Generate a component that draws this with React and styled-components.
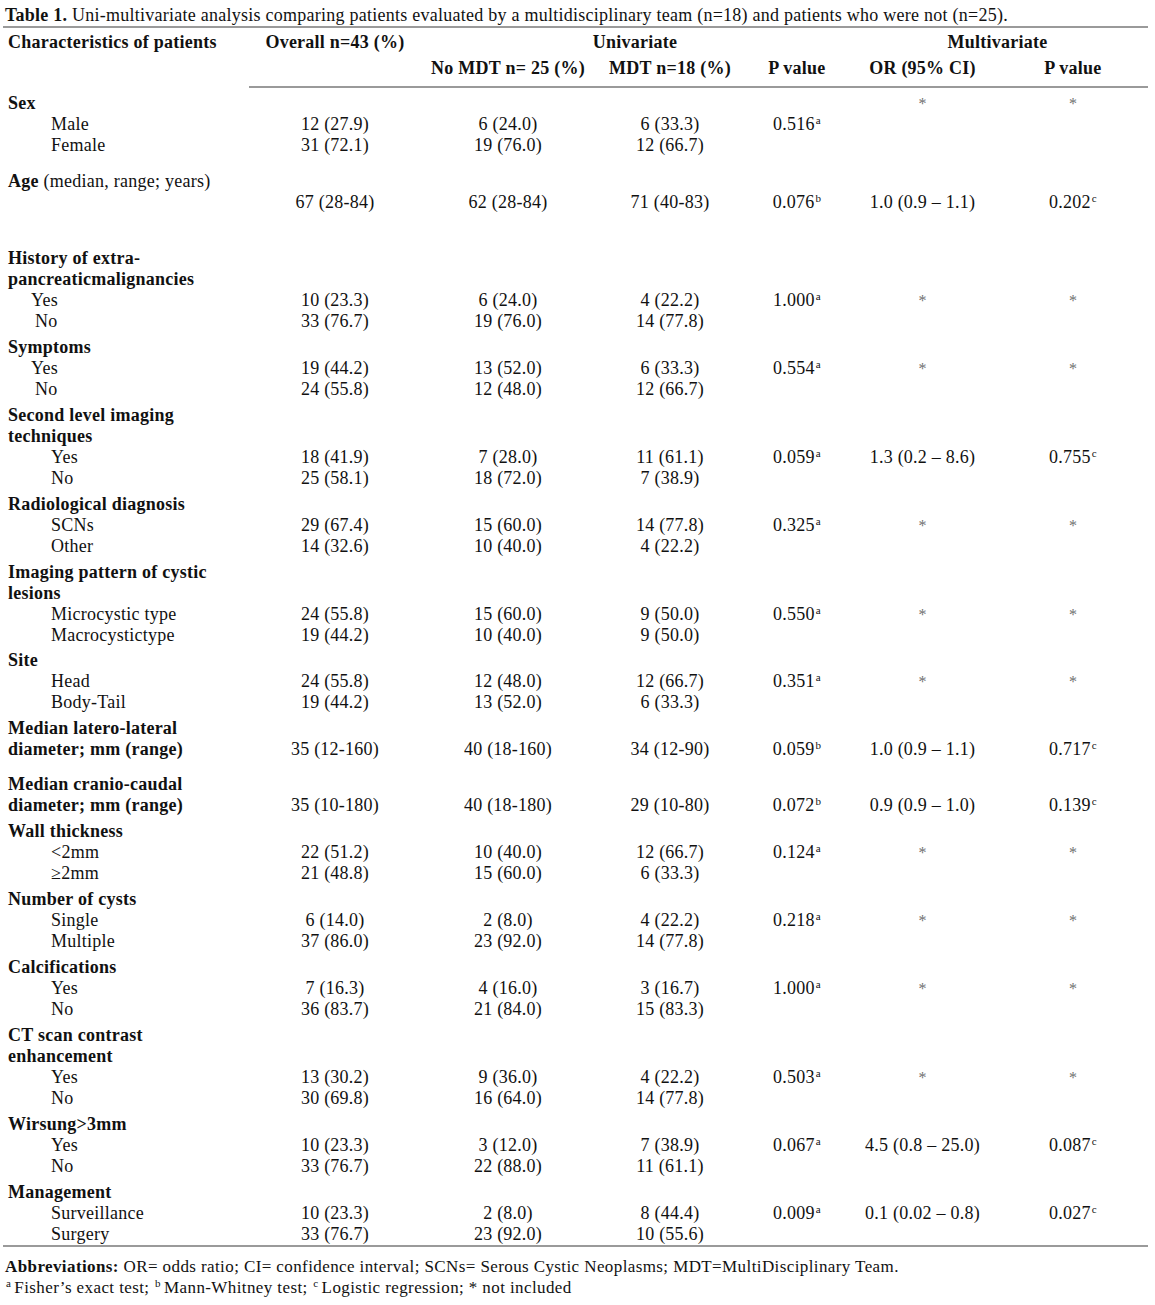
import React from "react";
import styled, { createGlobalStyle } from "styled-components";

const GlobalStyle = createGlobalStyle`
    body {
        margin: 0;
        background: #ffffff;
        color: #111111;
        font-family: "Liberation Serif", "Times New Roman", serif;
        font-size: 18px;
        letter-spacing: 0.25px;
    }
`;

const COLUMNS = "244px 176px 170px 154px 100px 151px 150px";

const Page = styled.div`
    width: 1145px;
    padding: 5px 0 0 3px;
`;

const Title = styled.div`
    height: 21px;
    line-height: 21px;
    padding-left: 2px;
    white-space: nowrap;
`;

const Rule = styled.div`
    height: 2px;
    background: #9a9a9a;
    margin-left: ${(p) => p.$inset || 0}px;
`;

const Head = styled.div`
    display: grid;
    grid-template-columns: ${COLUMNS};
    grid-auto-rows: 21px;
    row-gap: 5px;
    padding: 4px 0 7px;
    font-weight: 700;
    line-height: 21px;
`;

const HeadCell = styled.div`
    grid-column: ${(p) => p.$col};
    grid-row: ${(p) => p.$row};
    text-align: ${(p) => (p.$left ? "left" : "center")};
    padding-left: ${(p) => (p.$left ? 5 : 0)}px;
    white-space: nowrap;
`;

const Body = styled.div`
    padding: 5px 0 0;
`;

const Row = styled.div`
    display: grid;
    grid-template-columns: ${COLUMNS};
    height: 21px;
    line-height: 21px;
    margin-top: ${(p) => p.$gap || 0}px;
`;

const Label = styled.div`
    padding-left: ${(p) => p.$indent}px;
    font-weight: ${(p) => (p.$bold ? 700 : 400)};
    white-space: nowrap;
`;

const Cell = styled.div`
    text-align: center;
    white-space: nowrap;
`;

const Sup = styled.sup`
    font-size: 11px;
    line-height: 0;
    vertical-align: 6px;
    margin-left: 1px;
    margin-right: ${(p) => (p.$spaced ? 3 : 0)}px;
`;

const Star = styled.span`
    font-size: 16px;
    color: #707070;
    vertical-align: 2px;
`;

const Notes = styled.div`
    padding: 9px 0 0 2px;
    line-height: 21px;
    font-size: 17px;
    letter-spacing: 0.4px;
`;

const Note = styled.div`
    white-space: nowrap;
`;

const Bold = styled.span`
    font-weight: 700;
`;

const Normal = styled.span`
    font-weight: 400;
`;

const S = "*";

const rows = [
    { label: "Sex", bold: true, v: ["", "", "", "", S, S] },
    { label: "Male", indent: 48, v: ["12 (27.9)", "6 (24.0)", "6 (33.3)", ["0.516", "a"]] },
    { label: "Female", indent: 48, v: ["31 (72.1)", "19 (76.0)", "12 (66.7)"] },
    {
        label: (
            <>
                Age<Normal> (median, range; years)</Normal>
            </>
        ),
        bold: true,
        gap: 15,
    },
    { label: "", v: ["67 (28-84)", "62 (28-84)", "71 (40-83)", ["0.076", "b"], "1.0 (0.9 – 1.1)", ["0.202", "c"]] },
    { label: "History of extra-", bold: true, gap: 35 },
    { label: "pancreaticmalignancies", bold: true },
    { label: "Yes", indent: 28, v: ["10 (23.3)", "6 (24.0)", "4 (22.2)", ["1.000", "a"], S, S] },
    { label: "No", indent: 32, v: ["33 (76.7)", "19 (76.0)", "14 (77.8)"] },
    { label: "Symptoms", bold: true, gap: 5 },
    { label: "Yes", indent: 28, v: ["19 (44.2)", "13 (52.0)", "6 (33.3)", ["0.554", "a"], S, S] },
    { label: "No", indent: 32, v: ["24 (55.8)", "12 (48.0)", "12 (66.7)"] },
    { label: "Second level imaging", bold: true, gap: 5 },
    { label: "techniques", bold: true },
    { label: "Yes", indent: 48, v: ["18 (41.9)", "7 (28.0)", "11 (61.1)", ["0.059", "a"], "1.3 (0.2 – 8.6)", ["0.755", "c"]] },
    { label: "No", indent: 48, v: ["25 (58.1)", "18 (72.0)", "7 (38.9)"] },
    { label: "Radiological diagnosis", bold: true, gap: 5 },
    { label: "SCNs", indent: 48, v: ["29 (67.4)", "15 (60.0)", "14 (77.8)", ["0.325", "a"], S, S] },
    { label: "Other", indent: 48, v: ["14 (32.6)", "10 (40.0)", "4 (22.2)"] },
    { label: "Imaging pattern of cystic", bold: true, gap: 5 },
    { label: "lesions", bold: true },
    { label: "Microcystic type", indent: 48, v: ["24 (55.8)", "15 (60.0)", "9 (50.0)", ["0.550", "a"], S, S] },
    { label: "Macrocystictype", indent: 48, v: ["19 (44.2)", "10 (40.0)", "9 (50.0)"] },
    { label: "Site", bold: true, gap: 4 },
    { label: "Head", indent: 48, v: ["24 (55.8)", "12 (48.0)", "12 (66.7)", ["0.351", "a"], S, S] },
    { label: "Body-Tail", indent: 48, v: ["19 (44.2)", "13 (52.0)", "6 (33.3)"] },
    { label: "Median latero-lateral", bold: true, gap: 5 },
    {
        label: "diameter; mm (range)",
        bold: true,
        v: ["35 (12-160)", "40 (18-160)", "34 (12-90)", ["0.059", "b"], "1.0 (0.9 – 1.1)", ["0.717", "c"]],
    },
    { label: "Median cranio-caudal", bold: true, gap: 14 },
    {
        label: "diameter; mm (range)",
        bold: true,
        v: ["35 (10-180)", "40 (18-180)", "29 (10-80)", ["0.072", "b"], "0.9 (0.9 – 1.0)", ["0.139", "c"]],
    },
    { label: "Wall thickness", bold: true, gap: 5 },
    { label: "<2mm", indent: 48, v: ["22 (51.2)", "10 (40.0)", "12 (66.7)", ["0.124", "a"], S, S] },
    { label: "≥2mm", indent: 48, v: ["21 (48.8)", "15 (60.0)", "6 (33.3)"] },
    { label: "Number of cysts", bold: true, gap: 5 },
    { label: "Single", indent: 48, v: ["6 (14.0)", "2 (8.0)", "4 (22.2)", ["0.218", "a"], S, S] },
    { label: "Multiple", indent: 48, v: ["37 (86.0)", "23 (92.0)", "14 (77.8)"] },
    { label: "Calcifications", bold: true, gap: 5 },
    { label: "Yes", indent: 48, v: ["7 (16.3)", "4 (16.0)", "3 (16.7)", ["1.000", "a"], S, S] },
    { label: "No", indent: 48, v: ["36 (83.7)", "21 (84.0)", "15 (83.3)"] },
    { label: "CT scan contrast", bold: true, gap: 5 },
    { label: "enhancement", bold: true },
    { label: "Yes", indent: 48, v: ["13 (30.2)", "9 (36.0)", "4 (22.2)", ["0.503", "a"], S, S] },
    { label: "No", indent: 48, v: ["30 (69.8)", "16 (64.0)", "14 (77.8)"] },
    { label: "Wirsung>3mm", bold: true, gap: 5 },
    { label: "Yes", indent: 48, v: ["10 (23.3)", "3 (12.0)", "7 (38.9)", ["0.067", "a"], "4.5 (0.8 – 25.0)", ["0.087", "c"]] },
    { label: "No", indent: 48, v: ["33 (76.7)", "22 (88.0)", "11 (61.1)"] },
    { label: "Management", bold: true, gap: 5 },
    { label: "Surveillance", indent: 48, v: ["10 (23.3)", "2 (8.0)", "8 (44.4)", ["0.009", "a"], "0.1 (0.02 – 0.8)", ["0.027", "c"]] },
    { label: "Surgery", indent: 48, v: ["33 (76.7)", "23 (92.0)", "10 (55.6)"] },
];

const Value = ({ value }) => {
    if (value === S) return <Star>*</Star>;
    if (Array.isArray(value))
        return (
            <>
                {value[0]}
                <Sup>{value[1]}</Sup>
            </>
        );
    return value || null;
};

const DataRow = ({ row }) => {
    const values = row.v || [];
    return (
        <Row $gap={row.gap}>
            <Label $indent={row.indent || 5} $bold={row.bold}>
                {row.label}
            </Label>
            {[0, 1, 2, 3, 4, 5].map((i) => (
                <Cell key={i}>
                    <Value value={values[i]} />
                </Cell>
            ))}
        </Row>
    );
};

const App = () => (
    <Page>
        <GlobalStyle />
        <Title>
            <Bold>Table 1.</Bold> Uni-multivariate analysis comparing patients evaluated by a
            multidisciplinary team (n=18) and patients who were not (n=25).
        </Title>
        <Rule />
        <Head>
            <HeadCell $col="1" $row="1" $left>
                Characteristics of patients
            </HeadCell>
            <HeadCell $col="2" $row="1">
                Overall n=43 (%)
            </HeadCell>
            <HeadCell $col="3 / 6" $row="1">
                Univariate
            </HeadCell>
            <HeadCell $col="6 / 8" $row="1">
                Multivariate
            </HeadCell>
            <HeadCell $col="3" $row="2">
                No MDT n= 25 (%)
            </HeadCell>
            <HeadCell $col="4" $row="2">
                MDT n=18 (%)
            </HeadCell>
            <HeadCell $col="5" $row="2">
                P value
            </HeadCell>
            <HeadCell $col="6" $row="2">
                OR (95% CI)
            </HeadCell>
            <HeadCell $col="7" $row="2">
                P value
            </HeadCell>
        </Head>
        <Rule $inset={246} />
        <Body>
            {rows.map((row, i) => (
                <DataRow key={i} row={row} />
            ))}
        </Body>
        <Rule />
        <Notes>
            <Note>
                <Bold>Abbreviations:</Bold> OR= odds ratio; CI= confidence interval; SCNs= Serous
                Cystic Neoplasms; MDT=MultiDisciplinary Team.
            </Note>
            <Note>
                <Sup $spaced>a</Sup>Fisher’s exact test; <Sup $spaced>b</Sup>Mann-Whitney test;{" "}
                <Sup $spaced>c</Sup>Logistic regression; * not included
            </Note>
        </Notes>
    </Page>
);

export default App;
